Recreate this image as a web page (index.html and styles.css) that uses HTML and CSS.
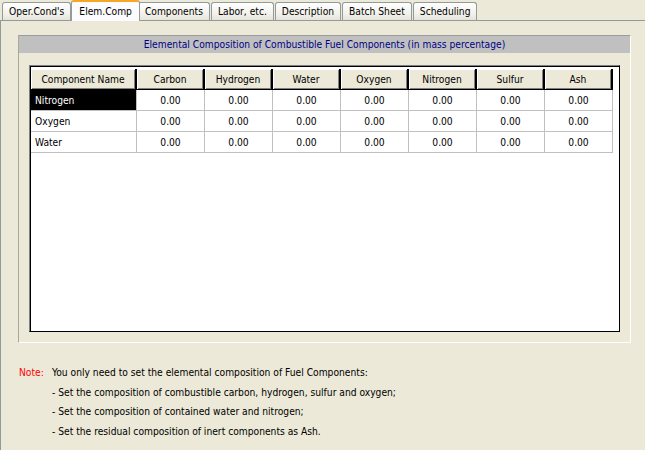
FILE: index.html
```html
<!DOCTYPE html>
<html>
<head>
<meta charset="utf-8">
<link rel="stylesheet" href="styles.css">
</head>
<body>
<div class="tabs">
  <div class="tab">Oper.Cond's</div>
  <div class="tab active">Elem.Comp</div>
  <div class="tab">Components</div>
  <div class="tab">Labor, etc.</div>
  <div class="tab">Description</div>
  <div class="tab">Batch Sheet</div>
  <div class="tab">Scheduling</div>
</div>
<div class="page">
  <div class="group">
    <div class="group-title">Elemental Composition of Combustible Fuel Components (in mass percentage)</div>
    <div class="grid-box">
      <table class="grid">
        <thead>
          <tr>
            <th class="name-col">Component Name</th>
            <th>Carbon</th>
            <th>Hydrogen</th>
            <th>Water</th>
            <th>Oxygen</th>
            <th>Nitrogen</th>
            <th>Sulfur</th>
            <th>Ash</th>
          </tr>
        </thead>
        <tbody>
          <tr>
            <td class="name selected">Nitrogen</td>
            <td>0.00</td><td>0.00</td><td>0.00</td><td>0.00</td><td>0.00</td><td>0.00</td><td>0.00</td>
          </tr>
          <tr>
            <td class="name">Oxygen</td>
            <td>0.00</td><td>0.00</td><td>0.00</td><td>0.00</td><td>0.00</td><td>0.00</td><td>0.00</td>
          </tr>
          <tr>
            <td class="name">Water</td>
            <td>0.00</td><td>0.00</td><td>0.00</td><td>0.00</td><td>0.00</td><td>0.00</td><td>0.00</td>
          </tr>
        </tbody>
      </table>
    </div>
  </div>
  <div class="note">
    <span class="note-label">Note:</span>
    <span>You only need to set the elemental composition of Fuel Components:</span>
    <span></span>
    <span>- Set the composition of combustible carbon, hydrogen, sulfur and oxygen;</span>
    <span></span>
    <span>- Set the composition of contained water and nitrogen;</span>
    <span></span>
    <span>- Set the residual composition of inert components as Ash.</span>
  </div>
</div>
</body>
</html>
```
FILE: styles.css
```css
html, body {
  margin: 0;
  padding: 0;
}
body {
  width: 645px;
  height: 450px;
  overflow: hidden;
  background: #ece9d8;
  font-family: "DejaVu Sans Condensed", "Liberation Sans", Arial, sans-serif;
  font-size: 10.2px;
  color: #000;
}
.tabs {
  display: flex;
  align-items: flex-end;
  height: 20px;
  padding-left: 2px;
  position: relative;
  z-index: 1;
}
.tab {
  height: 17px;
  line-height: 17px;
  padding: 0 6px;
  margin-right: 1px;
  border: 1px solid #919b9c;
  border-bottom: none;
  border-radius: 3px 3px 0 0;
  background: linear-gradient(#ffffff, #f3f2ec 60%, #e6e4d9);
  white-space: nowrap;
}
.tab.active {
  margin: 0 0 -1px -1px;
  padding: 0 7px;
  background: #fcfcfe;
  border-top: 2px solid #f5a623;
  height: 19px;
  line-height: 19px;
  border-bottom: none;
  position: relative;
}
.tab.active + .tab {
  margin-left: -2px;
}
.page {
  border-top: 1px solid #919b9c;
  border-left: 1px solid #919b9c;
  height: 430px;
  padding: 14px 0 0 17px;
  box-sizing: border-box;
}
.group {
  width: 613px;
  height: 308px;
  box-sizing: border-box;
  border-left: 1px solid #aca899;
  border-top: 1px solid #9d9d9d;
  border-right: 1px solid #ffffff;
  border-bottom: 1px solid #ffffff;
  display: flex;
  flex-direction: column;
  padding: 0 10px 10px 10px;
}
.group-title {
  height: 17px;
  line-height: 18px;
  margin: 0 -10px;
  background: #c0c0c0;
  color: #000080;
  text-align: center;
}
.grid-box {
  margin-top: 12px;
  flex: 1;
  background: #fff;
  border-top: 1px solid #808080;
  border-left: 1px solid #808080;
  border-right: 1px solid #000;
  border-bottom: 1px solid #000;
  box-shadow: inset 1px 1px 0 #000;
  padding: 3px 0 0 1px;
}
.grid {
  border-collapse: separate;
  border-spacing: 0;
  table-layout: fixed;
  width: 582px;
}
.grid th {
  width: 68px;
  height: 21px;
  padding: 0;
  font-weight: normal;
  background: #ece9d8;
  box-sizing: border-box;
  border-right: 2px solid #000;
  border-bottom: 1px solid #000;
  box-shadow: inset 1px 1px 0 #fff, inset -1px -1px 0 #808080;
  text-align: center;
}
.grid th.name-col {
  width: 106px;
}
.grid td {
  height: 21px;
  padding: 0;
  box-sizing: border-box;
  border-right: 1px solid #c0c0c0;
  border-bottom: 1px solid #c0c0c0;
  text-align: center;
}
.grid td.name {
  text-align: left;
  padding-left: 4px;
}
.grid td.selected {
  background: #000;
  color: #fff;
}
.note {
  display: grid;
  grid-template-columns: 33px auto;
  row-gap: 6.5px;
  margin: 23px 0 0 1px;
  line-height: 13px;
}
.note-label {
  color: #ff0000;
}
```
